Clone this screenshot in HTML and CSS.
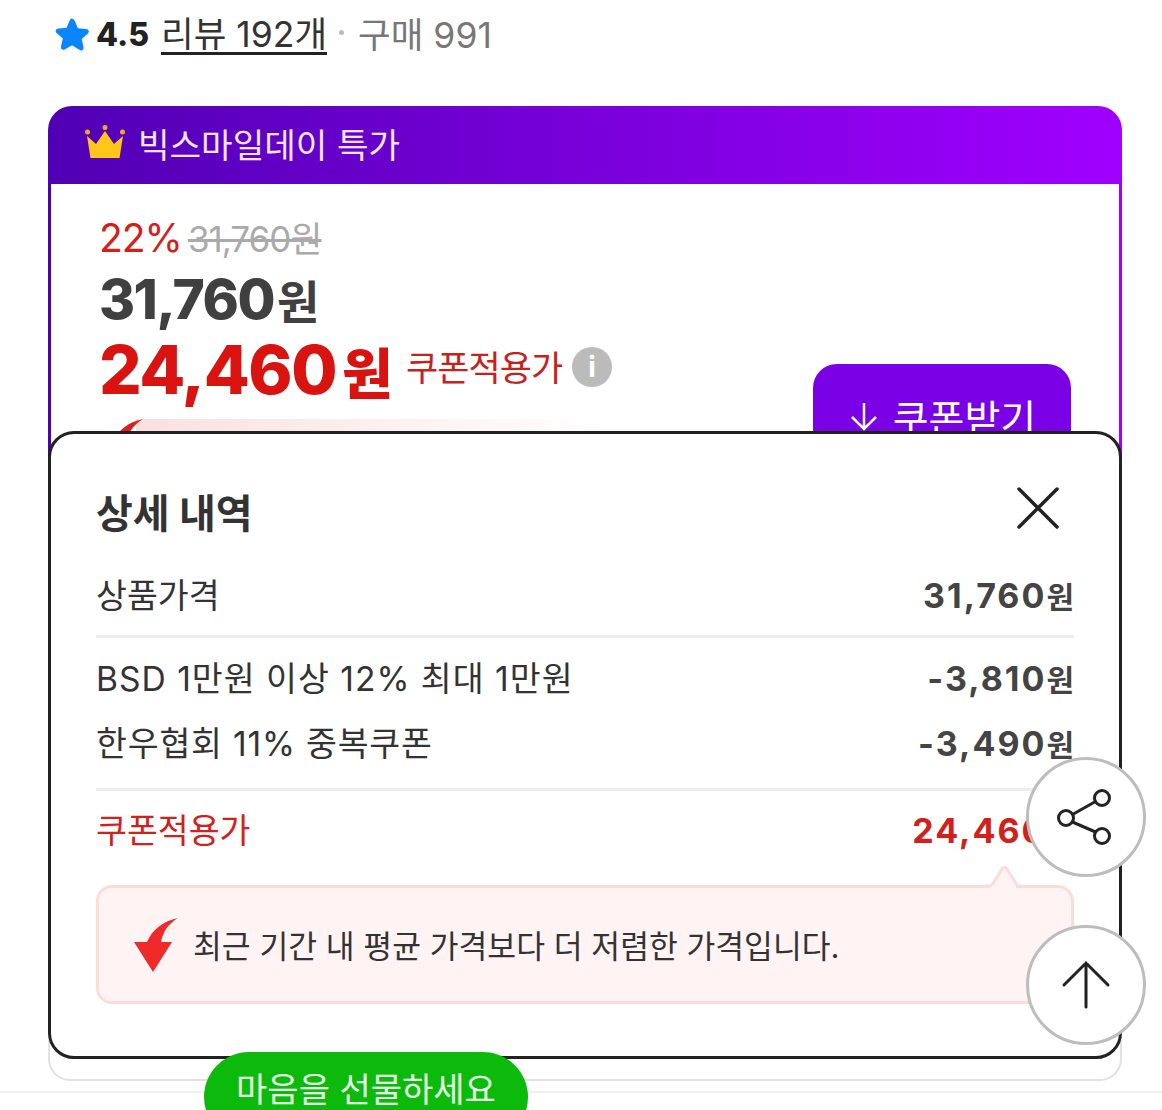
FILE: index.html
```html
<!DOCTYPE html>
<html lang="ko">
<head>
  <meta charset="UTF-8">
  <title>상세 내역</title>
  <link rel="stylesheet" href="styles.css">
</head>
<body>
  <div class="page">
    <div class="rating">
      <svg class="star" width="38" height="38" viewBox="0 0 36 36"><path d="M18 3.500c1.200 0 2 .8 2.600 2l3 7 7.600 .7c2.800 .3 3.700 2.700 1.700 4.500l-5.700 5 1.700 7.500c.6 2.600-1.600 4.200-3.900 2.800L18 28.600l-6.500 3.900c-2.300 1.400-4.500-.2-3.900-2.800l1.700-7.500-5.700-5c-2-1.800-1.100-4.200 1.700-4.500l7.600-.7 3-7c.6-1.200 1.400-2 2.600-2z" fill="#0a84ff"/></svg>
      <strong class="score">4.5</strong>
      <a class="reviews">리뷰 192개</a>
      <span class="dot"></span>
      <span class="buys">구매 991</span>
    </div>

    <div class="deal">
      <div class="deal-head">
        <svg width="42" height="36" viewBox="0 0 42 36"><circle cx="3.500" cy="7" r="2.500" fill="#f5a623"/><circle cx="21" cy="2.500" r="2.500" fill="#f5a623"/><circle cx="38.500" cy="7" r="2.500" fill="#f5a623"/><path d="M3 11l9 8 9-13 9 13 9-8-3.500 22h-29z" fill="#ffc61a"/></svg>
        <span>빅스마일데이 특가</span>
      </div>
      <div class="deal-body">
        <div class="was"><span class="pct">22%</span> <s>31,760원</s></div>
        <div class="price">31,760<span class="price-won">원</span></div>
        <div class="final">
          <span class="final-num">24,460<span class="final-won">원</span></span>
          <span class="final-label">쿠폰적용가</span>
          <span class="info">i</span>
        </div>
        <button class="coupon-btn">
          <svg width="32" height="32" viewBox="0 0 32 32"><path d="M16 3v26M4 17l12 12 12-12" fill="none" stroke="#fff" stroke-width="2.500"/></svg>
          쿠폰받기
        </button>
        <div class="low-strip"></div>
        <svg class="low-arrow" width="44" height="54" viewBox="0 0 44 54"><path d="M44 0C29 3 18 12 13 24H0l19 30 19-30H27C29 14 34 6 44 0z" fill="#d9201c"/></svg>
      </div>
    </div>
    <div class="under-line"></div>
    <div class="page-line"></div>

    <div class="popup">
      <div class="popup-head">
        <h2>상세 내역</h2>
        <svg width="44" height="44" viewBox="0 0 44 44"><path d="M3 3l38 38M41 3L3 41" stroke="#222" stroke-width="3.500" stroke-linecap="round"/></svg>
      </div>
      <div class="row first"><span>상품가격</span><b>31,760<i>원</i></b></div>
      <div class="row bsd"><span>BSD 1만원 이상 12% 최대 1만원</span><b>-3,810<i>원</i></b></div>
      <div class="row second"><span>한우협회 11% 중복쿠폰</span><b>-3,490<i>원</i></b></div>
      <div class="row total"><span>쿠폰적용가</span><b>24,460<i>원</i></b></div>
      <div class="note">
        <svg class="note-tip" width="36" height="24" viewBox="0 0 36 24"><path d="M4 21h27v3H4z" fill="#fff3f3"/><path d="M0 21h4c2 0 3-1 4-2.500l8-13c2-4 5-4 7 0l8 13c1 1.500 2 2.500 4 2.500h1" fill="#fff3f3" stroke="#fadcdc" stroke-width="3"/></svg>
        <svg width="46" height="54" viewBox="0 0 44 54"><path d="M44 0C29 3 18 12 13 24H0l19 30 19-30H27C29 14 34 6 44 0z" fill="#ee2a2a"/></svg>
        <span>최근 기간 내 평균 가격보다 더 저렴한 가격입니다.</span>
      </div>
    </div>

    <button class="fab share">
      <svg width="60" height="60" viewBox="0 0 60 60"><circle cx="46" cy="11" r="7.500" fill="none" stroke="#222" stroke-width="3"/><circle cx="10" cy="31" r="7.500" fill="none" stroke="#222" stroke-width="3"/><circle cx="46" cy="49" r="7.500" fill="none" stroke="#222" stroke-width="3"/><path d="M16.500 27.500L39.500 14.500M16.500 35L39.500 45" stroke="#222" stroke-width="3"/></svg>
    </button>
    <button class="fab top">
      <svg width="50" height="50" viewBox="0 0 50 50"><path d="M25 3v44M3 25L25 3l22 22" fill="none" stroke="#222" stroke-width="3" stroke-linecap="round"/></svg>
    </button>

    <div class="gift">마음을 선물하세요</div>
  </div>
</body>
</html>
```

FILE: styles.css
```css
* {
  box-sizing: border-box;
}
html, body {
  margin: 0;
  padding: 0;
  background: #fff;
}
body {
  font-family: Inter, "Noto Sans CJK KR", sans-serif;
  color: #222;
}
.page {
  position: relative;
  width: 1162px;
  height: 1110px;
  overflow: hidden;
  padding: 0 40px 0 48px;
}

/* rating row */
.rating {
  display: flex;
  align-items: center;
  height: 64px;
  padding-left: 5px;
  font-size: 35.500px;
}
.star {
  margin: 4px 5px 0 0;
}
.score {
  margin: 4px 12px 0 0;
  font-weight: 800;
  font-size: 32px;
}
.reviews {
  padding-top: 8px;
  border-bottom: 3px solid #222;
  line-height: 35px;
  color: #333;
}
.dot {
  width: 5px;
  height: 5px;
  margin: 0 14px 0 12px;
  border-radius: 50%;
  background: #bbb;
}
.buys {
  color: #777;
}

/* deal card */
.deal {
  margin-top: 42px;
  height: 400px;
  border-radius: 24px 24px 0 0;
  background: linear-gradient(90deg, #5000b4, #a000ff);
  padding: 0 3px;
}
.deal-head {
  display: flex;
  align-items: center;
  gap: 12px;
  height: 78px;
  padding: 0 0 5px 33px;
  color: #f4e4ff;
  font-size: 34.300px;
}
.deal-body {
  position: relative;
  height: 322px;
  background: #fff;
  padding: 27px 0 0 48px;
}
.was {
  display: flex;
  align-items: baseline;
  gap: 6px;
  height: 52px;
  font-size: 39px;
  letter-spacing: -1px;
}
.pct {
  color: #d0211c;
}
.was s {
  color: #aaa;
  font-size: 35px;
}
.price {
  font-size: 55px;
  font-weight: 800;
  line-height: 72px;
  color: #404040;
  letter-spacing: -1.500px;
}
.price-won {
  font-size: 46px;
  font-weight: 700;
  margin-left: 3px;
}
.final {
  display: flex;
  align-items: center;
  height: 70px;
  margin-top: -4px;
}
.final-num {
  font-size: 67px;
  font-weight: 800;
  color: #d91410;
  letter-spacing: -1.500px;
  margin-right: 15px;
}
.final-won {
  font-size: 55px;
  font-weight: 800;
  margin-left: 6px;
}
.final-label {
  margin: 0 10px 8px 0;
  font-size: 35px;
  color: #c8201c;
  letter-spacing: -1px;
}
.info {
  width: 40px;
  height: 40px;
  margin-bottom: 4px;
  border-radius: 50%;
  background: #bbb;
  color: #fff;
  font-weight: 700;
  font-size: 28px;
  text-align: center;
  line-height: 40px;
}
.coupon-btn {
  position: absolute;
  top: 180px;
  right: 48px;
  display: flex;
  align-items: center;
  justify-content: center;
  gap: 13px;
  width: 258px;
  height: 104px;
  padding: 0;
  border: 0;
  border-radius: 24px;
  background: #7a00e6;
  color: #fff;
  font: inherit;
  font-size: 39px;
}
.low-strip {
  position: absolute;
  left: 85px;
  top: 235px;
  width: 470px;
  height: 60px;
  background: linear-gradient(90deg, #fae0e0, #fff);
}
.low-arrow {
  position: absolute;
  left: 48px;
  top: 235px;
}
.under-line {
  position: absolute;
  left: 48px;
  top: 1040px;
  width: 1074px;
  height: 41px;
  border: 2px solid #e2e2e2;
  border-top: 0;
  border-radius: 0 0 22px 22px;
}
.page-line {
  position: absolute;
  left: 0;
  right: 0;
  top: 1091px;
  height: 2px;
  background: #f0f0f0;
}

/* detail popup */
.popup {
  position: absolute;
  left: 48px;
  top: 431px;
  width: 1074px;
  height: 628px;
  padding: 0 45px;
  border: 3px solid #222;
  border-radius: 26px;
  background: #fff;
}
.popup-head {
  display: flex;
  align-items: center;
  justify-content: space-between;
  height: 134px;
  padding: 28px 14px 14px 0;
}
.popup-head h2 {
  margin: 6px 0 0;
  font-size: 40px;
  font-weight: 700;
  color: #333;
}
.row {
  display: flex;
  align-items: center;
  justify-content: space-between;
  height: 65px;
  font-size: 33.600px;
  color: #333;
}
.row span {
  margin-bottom: 3px;
}
.row.bsd span {
  letter-spacing: 1px;
}
.row b {
  font-size: 34px;
  font-weight: 700;
  color: #444;
  letter-spacing: 2px;
}
.row i {
  font-style: normal;
  font-size: 30px;
  letter-spacing: 0;
}
.row.first {
  height: 70px;
  margin-bottom: 7px;
  padding-bottom: 14px;
  border-bottom: 3px solid #eee;
}
.row.second {
  height: 81px;
  padding-bottom: 13px;
  border-bottom: 3px solid #eee;
}
.row.second span {
  letter-spacing: .8px;
}
.row.total {
  height: 78px;
  color: #d0211c;
}
.row.total b {
  color: #d0211c;
}
.note {
  position: relative;
  display: flex;
  align-items: center;
  gap: 14px;
  height: 119px;
  margin-top: 16px;
  padding-left: 34px;
  border: 3px solid #fadcdc;
  border-radius: 16px;
  background: #fff3f3;
  font-size: 31.300px;
  color: #333;
}
.note-tip {
  position: absolute;
  right: 50px;
  top: -23px;
}

/* floating buttons */
.fab {
  position: absolute;
  left: 1026px;
  display: flex;
  align-items: center;
  justify-content: center;
  width: 120px;
  height: 120px;
  padding: 0;
  border: 3px solid #bdbdbd;
  border-radius: 50%;
  background: #fff;
}
.share {
  top: 757px;
}
.top {
  top: 925px;
}
.gift {
  position: absolute;
  left: 204px;
  top: 1052px;
  width: 324px;
  height: 90px;
  padding-top: 11px;
  border-radius: 45px;
  background: #0cba0c;
  color: #eaffea;
  font-size: 34px;
  text-align: center;
}
```
